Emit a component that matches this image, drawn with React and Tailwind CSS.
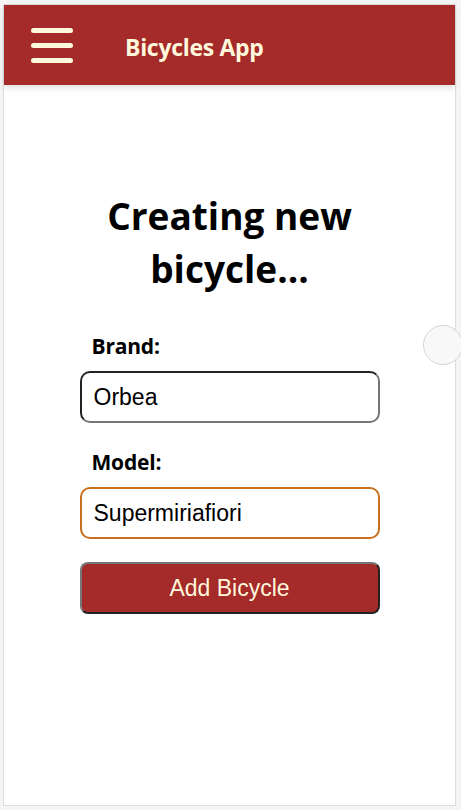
import React, { useState } from 'react';

const App = () => {
    const [brand, setBrand] = useState('Orbea');
    const [model, setModel] = useState('Supermiriafiori');

    return (
        <div className="min-h-screen w-full bg-[#f5f5f5] pt-[4px] pl-[3px]" style={{ fontFamily: '"Open Sans", "Noto Sans", sans-serif' }}>
            <div className="relative w-[453px] h-[802px] bg-white border border-[#dddddd] overflow-visible">
                {/* header */}
                <header className="h-[80px] bg-[#a52a2a] flex items-center shadow-[0_3px_6px_rgba(0,0,0,0.12)]">
                    <div className="ml-[27px] w-[42px] flex flex-col gap-[10px]">
                        <span className="block h-[5px] w-[42px] rounded-full bg-[#fff8dc]"></span>
                        <span className="block h-[5px] w-[42px] rounded-full bg-[#fff8dc]"></span>
                        <span className="block h-[5px] w-[42px] rounded-full bg-[#fff8dc]"></span>
                    </div>
                    <h1 className="ml-[52px] pt-[4px] text-[23px] font-bold text-[#fff8dc] tracking-[-0.3px]">Bicycles App</h1>
                </header>

                {/* floating round button on the edge */}
                <div className="absolute left-[419px] top-[320px] w-[40px] h-[40px] rounded-full border border-[#d4d4d4] bg-[#f8f8f8]"></div>

                <main className="flex flex-col items-center pt-[104px]">
                    <h2 className="w-[300px] text-center text-[37px] leading-[53px] font-bold text-black">Creating new bicycle...</h2>

                    <form className="w-[300px] flex flex-col mt-[37px]" onSubmit={(e) => e.preventDefault()}>
                        <label className="ml-[12px] text-[21px] leading-[28px] font-bold text-black tracking-[-0.2px]">Brand:</label>
                        <input
                            value={brand}
                            onChange={(e) => setBrand(e.target.value)}
                            className="mt-[11px] h-[52px] w-full rounded-[10px] border-2 border-t-[#222] border-l-[#222] border-r-[#767676] border-b-[#767676] px-[12px] text-[23px] text-black outline-none"
                            style={{ fontFamily: '"Liberation Sans", Arial, sans-serif' }}
                        />

                        <label className="mt-[25px] ml-[12px] text-[21px] leading-[28px] font-bold text-black tracking-[-0.2px]">Model:</label>
                        <input
                            value={model}
                            onChange={(e) => setModel(e.target.value)}
                            className="mt-[11px] h-[52px] w-full rounded-[10px] border-2 border-[#c8701e] px-[12px] text-[23px] text-black outline-none"
                            style={{ fontFamily: '"Liberation Sans", Arial, sans-serif' }}
                        />

                        <button
                            type="submit"
                            className="mt-[23px] h-[52px] w-full rounded-[8px] border-2 border-t-[#767676] border-l-[#767676] border-r-[#222] border-b-[#222] bg-[#a52a2a] text-[23px] text-[#fff8dc]"
                            style={{ fontFamily: '"Liberation Sans", Arial, sans-serif' }}
                        >
                            Add Bicycle
                        </button>
                    </form>
                </main>
            </div>
        </div>
    );
};

export default App;
